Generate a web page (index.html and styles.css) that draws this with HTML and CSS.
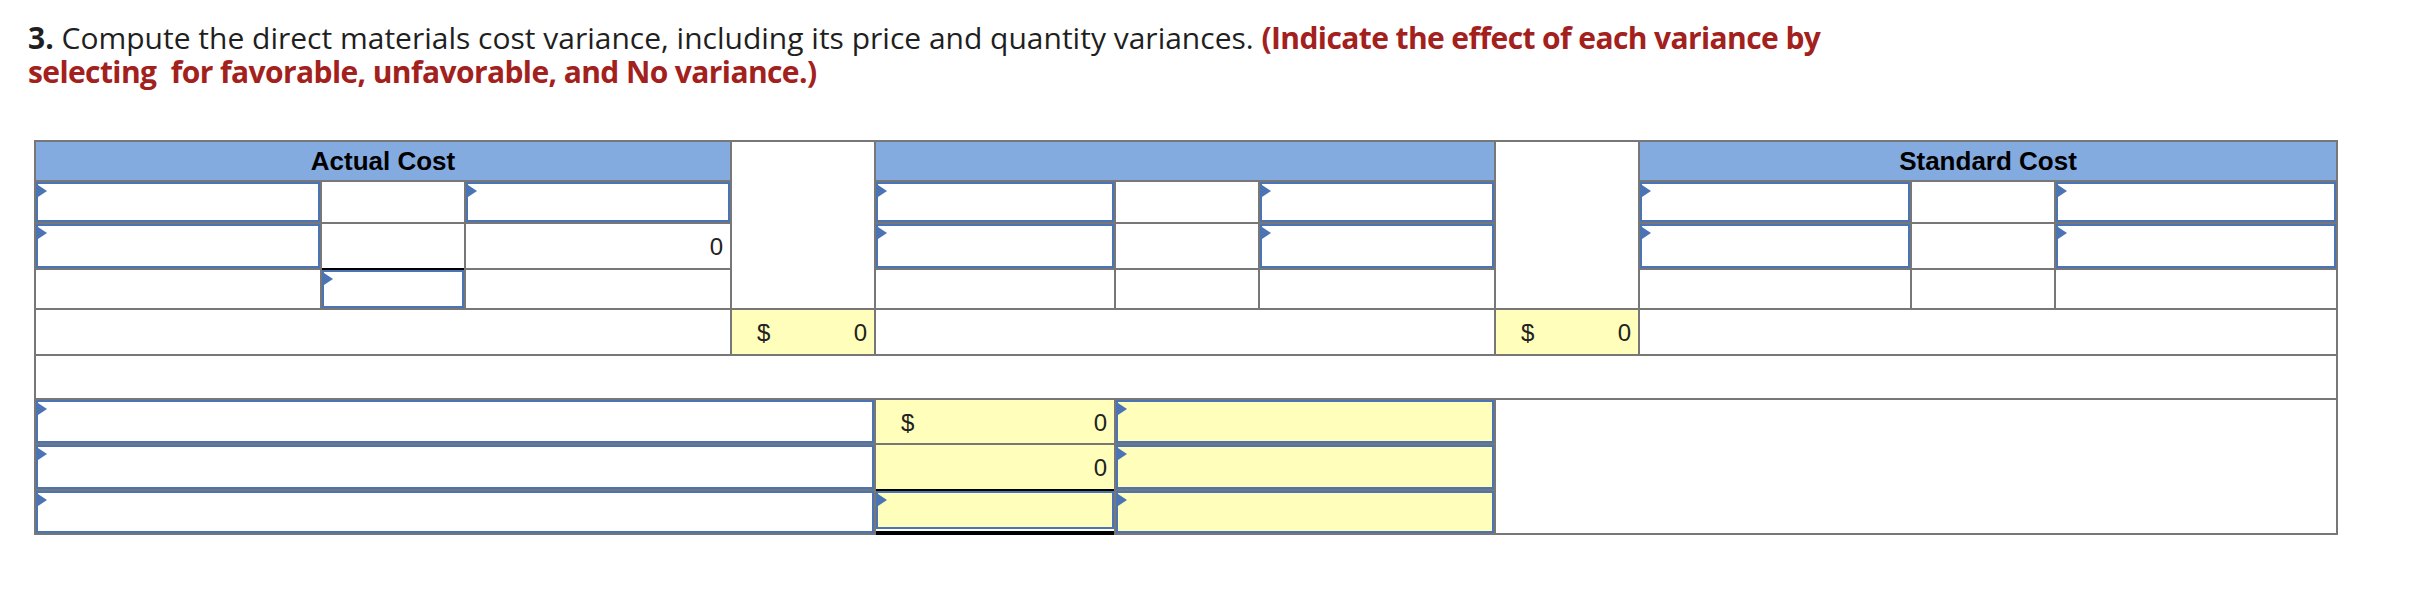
FILE: index.html
```html
<!DOCTYPE html>
<html lang="en">
<head>
<meta charset="utf-8">
<title>Direct materials cost variance</title>
<link rel="stylesheet" href="styles.css">
</head>
<body>
<main class="page">
  <p class="question"><b class="num">3.</b> Compute the direct materials cost variance, including its price and quantity variances. <b class="note">(Indicate the effect of each variance by</b> <b class="note">selecting &nbsp;for favorable, unfavorable, and No variance.)</b></p>

  <div class="sheet">
    <!-- header row -->
    <div class="hdr span3">Actual Cost</div>
    <div class="cell rows4"></div>
    <div class="hdr span3"></div>
    <div class="cell rows4"></div>
    <div class="hdr span3">Standard Cost</div>

    <!-- row 1 -->
    <div class="inp"></div>
    <div class="cell"></div>
    <div class="inp"></div>
    <div class="inp"></div>
    <div class="cell"></div>
    <div class="inp"></div>
    <div class="inp"></div>
    <div class="cell"></div>
    <div class="inp"></div>

    <!-- row 2 -->
    <div class="inp"></div>
    <div class="cell rule"></div>
    <div class="cell val"><span>0</span></div>
    <div class="inp"></div>
    <div class="cell"></div>
    <div class="inp"></div>
    <div class="inp"></div>
    <div class="cell"></div>
    <div class="inp"></div>

    <!-- row 3 -->
    <div class="cell"></div>
    <div class="inp"></div>
    <div class="cell"></div>
    <div class="cell"></div>
    <div class="cell"></div>
    <div class="cell"></div>
    <div class="cell"></div>
    <div class="cell"></div>
    <div class="cell"></div>

    <!-- row 4 -->
    <div class="cell span3"></div>
    <div class="cell yel val money"><span>$</span><span>0</span></div>
    <div class="cell span3"></div>
    <div class="cell yel val money"><span>$</span><span>0</span></div>
    <div class="cell span3"></div>

    <!-- row 5 -->
    <div class="cell span11"></div>

    <!-- row 6 -->
    <div class="inp span4"></div>
    <div class="cell yel val money"><span>$</span><span>0</span></div>
    <div class="inp yel span2"></div>
    <div class="cell span4 rows3"></div>

    <!-- row 7 -->
    <div class="inp span4"></div>
    <div class="cell yel val rule"><span>0</span></div>
    <div class="inp yel span2"></div>

    <!-- row 8 -->
    <div class="inp span4"></div>
    <div class="cell total"><div class="inp yel fill"></div></div>
    <div class="inp yel span2"></div>
  </div>
</main>
</body>
</html>
```

FILE: styles.css
```css
html, body {
  margin: 0;
  padding: 0;
  background: #ffffff;
}

.page {
  padding: 21px 0 0 28px;
}

.question {
  margin: 0;
  width: 1880px;
  font-family: "Open Sans", Lato, sans-serif;
  font-size: 30px;
  line-height: 34px;
  color: #1f1f1f;
  letter-spacing: 0;
}

.question .num {
  font-weight: 700;
}

.question .note {
  font-weight: 700;
  color: #a3211d;
  letter-spacing: -0.6px;
}

.sheet {
  margin: 51px 0 0 6px;
  display: grid;
  grid-template-columns: 284px 142px 264px 142px 238px 142px 234px 142px 270px 142px 280px;
  grid-template-rows: 38px 40px 44px 38px 44px 42px 43px 44px 42px;
  gap: 2px;
  padding: 2px;
  width: max-content;
  background: #777777;
  font-family: "Liberation Sans", Arial, sans-serif;
}

.cell,
.inp,
.hdr {
  box-sizing: border-box;
  background: #ffffff;
}

.hdr {
  background: #83abe0;
  color: #000000;
  font-weight: 700;
  font-size: 26px;
  display: flex;
  align-items: center;
  justify-content: center;
}

.span2 { grid-column: span 2; }
.span3 { grid-column: span 3; }
.span4 { grid-column: span 4; }
.span11 { grid-column: span 11; }
.rows3 { grid-row: span 3; }
.rows4 { grid-row: span 4; }

.inp {
  position: relative;
  border: 2px solid #4a74b4;
}

.inp::before {
  content: "";
  position: absolute;
  left: 0;
  top: 1px;
  width: 9px;
  height: 12px;
  background: #4a74b4;
  clip-path: polygon(0 0, 100% 50%, 0 100%);
}

.yel {
  background: #ffffbb;
}

.val {
  display: flex;
  align-items: center;
  justify-content: flex-end;
  padding: 2px 7px 0 0;
  font-size: 24px;
  color: #222222;
}

.money {
  justify-content: space-between;
  padding-left: 25px;
}

.rule {
  box-shadow: 0 2px 0 0 #000000;
}

.total {
  display: flex;
  flex-direction: column;
  padding-bottom: 2px;
  border-bottom: 2px solid #000000;
  box-shadow: 0 2px 0 0 #000000;
}

.fill {
  flex: 1;
}
```
